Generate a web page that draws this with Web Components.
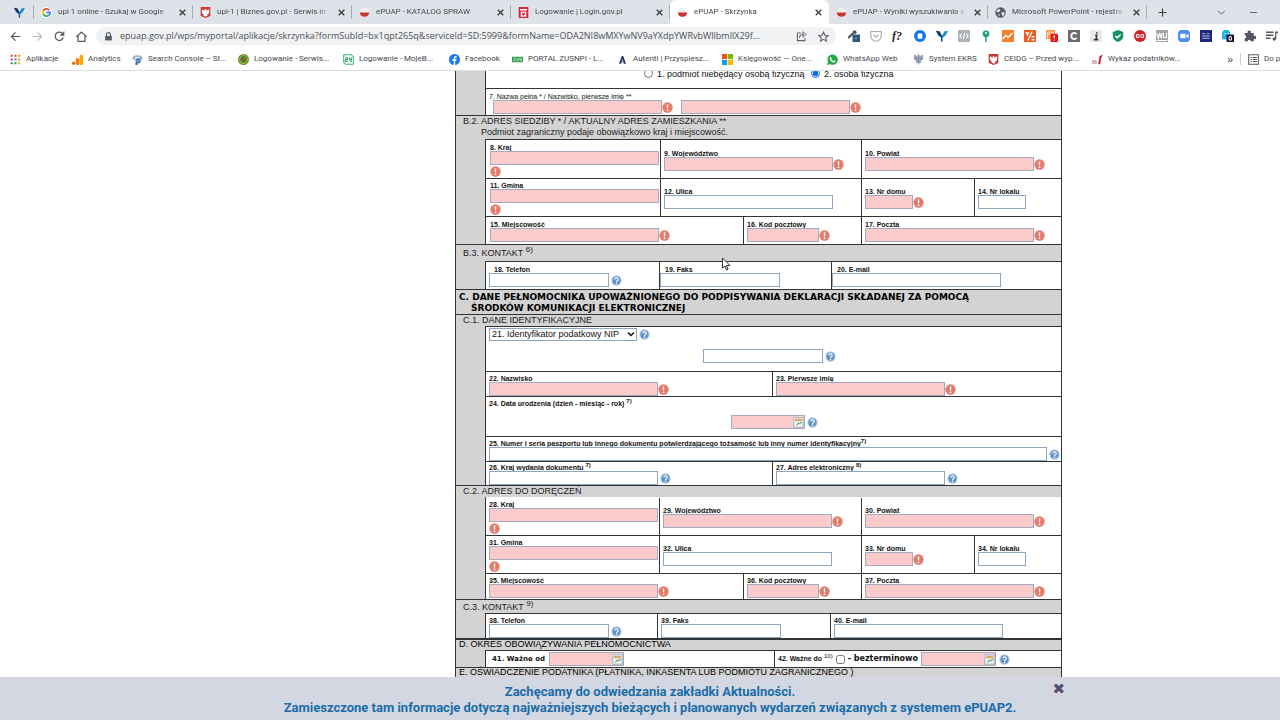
<!DOCTYPE html>
<html lang="pl">
<head>
<meta charset="utf-8">
<title>ePUAP - Skrzynka</title>
<style>
  html, body { height: 100%; }
  body {
    margin: 0;
    display: flex;
    flex-direction: column;
    overflow: hidden;
    background: #fff;
    color: #111;
    font-family: "Liberation Sans", Arial, sans-serif;
  }
</style>
</head>
<body>
<browser-chrome></browser-chrome>

<page-view>
  <form-section>
    <form-row style="--h:26px; --cols:158fr 167fr 250fr">
      <span></span>
      <radio-choice plain label="1. podmiot niebędący osobą fizyczną"></radio-choice>
      <radio-choice plain checked label="2. osoba fizyczna"></radio-choice>
    </form-row>
    <form-row style="--h:27px; --cols:188fr 387fr">
      <form-field light label="7. Nazwa pełna * / Nazwisko, pierwsze imię **" w="169" state="error" style="--input-indent:4px"></form-field>
      <form-field plain hint="Pierwsze imię" w="169" state="error" style="--input-indent:4px"></form-field>
    </form-row>
  </form-section>

  <form-section>
    <form-heading slot="heading" style="--h:24px">B.2. ADRES SIEDZIBY * / AKTUALNY ADRES ZAMIESZKANIA **
      <span slot="sub">Podmiot zagraniczny podaje obowiązkowo kraj i miejscowość.</span></form-heading>
    <form-row style="--h:39px; --cols:174fr 201fr 200fr; --first-pad:4px">
      <form-field label="8. Kraj" w="169" state="error" below></form-field>
      <form-field label="9. Województwo" w="169" state="error"></form-field>
      <form-field label="10. Powiat" w="169" state="error"></form-field>
    </form-row>
    <form-row style="--h:38px; --cols:174fr 201fr 113fr 87fr; --first-pad:4px">
      <form-field label="11. Gmina" w="169" state="error" below></form-field>
      <form-field label="12. Ulica" w="169"></form-field>
      <form-field label="13. Nr domu" w="48" state="error"></form-field>
      <form-field label="14. Nr lokalu" w="48"></form-field>
    </form-row>
    <form-row style="--h:28px; --cols:257fr 118fr 200fr; --first-pad:4px">
      <form-field label="15. Miejscowość" w="169" state="error"></form-field>
      <form-field label="16. Kod pocztowy" w="72" state="error"></form-field>
      <form-field label="17. Poczta" w="169" state="error"></form-field>
    </form-row>
  </form-section>

  <form-section>
    <form-heading slot="heading" style="--h:17px; --top:3px">B.3. KONTAKT <sup>6)</sup></form-heading>
    <form-row style="--h:28px; --cols:173fr 172fr 230fr; --label-indent:5px; --pad:0px; --first-pad:3px">
      <form-field label="18. Telefon" w="120" state="help"></form-field>
      <form-field label="19. Faks" w="120"></form-field>
      <form-field label="20. E-mail" w="169"></form-field>
    </form-row>
  </form-section>

  <form-section>
    <form-heading slot="heading" strong style="--h:25px">C. DANE PEŁNOMOCNIKA UPOWAŻNIONEGO DO PODPISYWANIA DEKLARACJI SKŁADANEJ ZA POMOCĄ
      <span slot="sub">ŚRODKÓW KOMUNIKACJI ELEKTRONICZNEJ</span></form-heading>
    <form-heading slot="heading" style="--h:12px">C.1. DANE IDENTYFIKACYJNE</form-heading>
    <form-row style="--h:45px; --cols:1fr">
      <tax-identifier></tax-identifier>
    </form-row>
    <form-row style="--h:25px; --cols:286fr 289fr">
      <form-field label="22. Nazwisko" w="169" state="error"></form-field>
      <form-field label="23. Pierwsze imię" w="169" state="error"></form-field>
    </form-row>
    <form-row style="--h:40px; --cols:1fr">
      <form-field label="24. Data urodzenia (dzień - miesiąc - rok)" note="7)" w="74" state="help" date style="--input-indent:242px"></form-field>
    </form-row>
    <form-row style="--h:25px; --cols:1fr">
      <form-field label="25. Numer i seria paszportu lub innego dokumentu potwierdzającego tożsamość lub inny numer identyfikacyjny" note="7)" tight w="558" state="help"></form-field>
    </form-row>
    <form-row style="--h:24px; --cols:286fr 289fr">
      <form-field label="26. Kraj wydania dokumentu" note="7)" w="169" state="help"></form-field>
      <form-field label="27. Adres elektroniczny" note="8)" w="169" state="help"></form-field>
    </form-row>
  </form-section>

  <form-section>
    <form-heading slot="heading" style="--h:12px">C.2. ADRES DO DORĘCZEŃ</form-heading>
    <form-row style="--h:38px; --cols:173fr 202fr 200fr; --line:transparent">
      <form-field label="28. Kraj" w="169" state="error" below></form-field>
      <form-field label="29. Województwo" w="169" state="error"></form-field>
      <form-field label="30. Powiat" w="169" state="error"></form-field>
    </form-row>
    <form-row style="--h:38px; --cols:173fr 202fr 113fr 87fr">
      <form-field label="31. Gmina" w="169" state="error" below></form-field>
      <form-field label="32. Ulica" w="169"></form-field>
      <form-field label="33. Nr domu" w="48" state="error"></form-field>
      <form-field label="34. Nr lokalu" w="48"></form-field>
    </form-row>
    <form-row style="--h:26px; --cols:257fr 118fr 200fr">
      <form-field label="35. Miejscowość" w="169" state="error"></form-field>
      <form-field label="36. Kod pocztowy" w="72" state="error"></form-field>
      <form-field label="37. Poczta" w="169" state="error"></form-field>
    </form-row>
  </form-section>

  <form-section>
    <form-heading slot="heading" style="--h:14px; --top:2px">C.3. KONTAKT <sup>9)</sup></form-heading>
    <form-row style="--h:25px; --cols:171fr 173fr 231fr">
      <form-field label="38. Telefon" w="120" state="help"></form-field>
      <form-field label="39. Faks" w="120"></form-field>
      <form-field label="40. E-mail" w="169"></form-field>
    </form-row>
  </form-section>

  <form-section>
    <form-heading slot="heading" major style="--h:12px; --rule:2px">D. OKRES OBOWIĄZYWANIA PEŁNOMOCNICTWA</form-heading>
    <form-row style="--h:17px; --cols:288fr 287fr">
      <validity-from></validity-from>
      <validity-to></validity-to>
    </form-row>
  </form-section>

  <form-section>
    <form-heading slot="heading" major style="--h:40px">E. OŚWIADCZENIE PODATNIKA (PŁATNIKA, INKASENTA LUB PODMIOTU ZAGRANICZNEGO )</form-heading>
  </form-section>
</page-view>

<notice-bar>
  <p>Zachęcamy do odwiedzania zakładki Aktualności.</p>
  <p>Zamieszczone tam informacje dotyczą najważniejszych bieżących i planowanych wydarzeń związanych z systemem ePUAP2.</p>
</notice-bar>
<mouse-pointer></mouse-pointer>

<script>
// every glyph is drawn on a 16x16 grid
const stroke = 'fill="none" stroke="#555a60" stroke-width="1.8"';
const flag = '<circle cx="8" cy="8" r="7" fill="#f1eeee"/><path d="M1 8h14a7 6 0 0 1-14 0z" fill="#c5362f"/>';
const eagle = (bg, fg) => `<path d="M1 0h14v13l-7 3-7-3z" fill="${bg}"/><path d="M8 3l1.500 1v2l2-2.500 2 .5-.5 5-2.500 2 .5 2H9l-1 1.500L7 13H5l.5-2L3 9l-.5-5 2-.5 2 2.500V4z" fill="${fg}"/>`;
const icons = {
  y: '<path d="M0 1l5 1 3 6 3-6 5-1-3 6-4 3v5l-1 1-1-1v-5L3 7z" fill="#1789c9"/><path d="M0 1l5 1 3 6v8l-1-1v-5L3 7z" fill="#123c6b"/>',
  google: '<circle cx="8" cy="8" r="8" fill="#fff"/><g fill="none" stroke-width="2.600"><path d="M12 4.500A5.300 5.300 0 0 0 3.400 5.500" stroke="#ea4335"/><path d="M3.400 5.500a5.300 5.300 0 0 0 0 5" stroke="#fbbc05"/><path d="M3.400 10.500A5.300 5.300 0 0 0 11.500 12" stroke="#34a853"/><path d="M11.500 12A5.300 5.300 0 0 0 13.300 8H8" stroke="#4285f4"/></g>',
  biznes: eagle('#d23a3a', '#fff'),
  login: '<path d="M1 0h14v16H1z" fill="#d8293c"/><path d="M3 3h10v2H3zM4 7h8v7H4z" fill="#fff"/><path d="M6 8l2 1 2-1v3l-2 2-2-2z" fill="#d8293c"/>',
  flag,
  globe: '<circle cx="8" cy="8" r="7.500" fill="#54585e"/><path d="M3 4l4-1 1 2-3 3-3-1zM9 8l4-1 1 3-3 4-1-3zM4 10l3 1v3z" fill="#dfe2e8"/>',
  close: '<path d="M3 3l10 10M13 3L3 13" stroke="#3c4043" stroke-width="2.400"/>',
  plus: '<path d="M8 1v14M1 8h14" stroke="#3c4043" stroke-width="2"/>',
  chevron: '<path d="M2 5l6 6 6-6" fill="none" stroke="#50545a" stroke-width="1.600"/>',
  caret: '<path d="M2 5l6 6 6-6" fill="none" stroke="#111" stroke-width="3"/>',
  minus: '<path d="M2 8h12" stroke="#50545a" stroke-width="1.600"/>',
  back: `<path d="M15 8H2M8 2L2 8l6 6" ${stroke}/>`,
  forward: '<path d="M1 8h13M8 2l6 6-6 6" fill="none" stroke="#b9bcc0" stroke-width="1.800"/>',
  reload: `<path d="M13.500 9.500A6 6 0 1 1 12 3.500" ${stroke}/><path d="M15 0v7H8z" fill="#555a60"/>`,
  home: `<path d="M1 8l7-6.500L15 8h-2v7H3V8z" ${stroke}/>`,
  lock: '<path d="M2 7h12v8H2z" fill="#5a5e63"/><path d="M4.500 7V4.500a3.500 3.500 0 0 1 7 0V7" fill="none" stroke="#5a5e63" stroke-width="2"/>',
  share: '<path d="M7 3H2v11h11v-4M5 10c0-4 3-5 6-5" fill="none" stroke="#5f6368" stroke-width="1.500"/><path d="M10 1l5 4-5 4z" fill="none" stroke="#5f6368" stroke-width="1.300"/>',
  star: '<path d="M8 1.500l2 4.600 5 .4-3.800 3.300 1.200 4.900L8 12l-4.400 2.700 1.200-4.900L1 6.500l5-.4z" fill="none" stroke="#5f6368" stroke-width="1.500"/>',
  picker: '<path d="M0 9l6-6 2 2-6 6H0zM6 2l3-2 3 3-3 3z" fill="#4a4f57"/><path d="M6 6h10v10H6z" fill="#33557d"/><path d="M9 11h3" stroke="#b8cce4"/>',
  pocket: '<path d="M1 2h14v6a7 7 0 0 1-14 0z" fill="#fafafa" stroke="#a8abb0" stroke-width="1.500"/><path d="M5 6.500l3 3 3-3" fill="none" stroke="#a8abb0" stroke-width="1.600"/>',
  font: '<text x="0" y="13" font-family="Liberation Serif" font-style="italic" font-weight="700" font-size="16" fill="#222">f?</text>',
  bluebox: '<circle cx="8" cy="8" r="8" fill="#1677e6"/><rect x="5" y="4.500" width="6" height="7" rx="1" fill="#fff"/>',
  code: '<path d="M0 0h16v16H0z" fill="#aeb2b9"/><path d="M5 5L2.500 8 5 11M11 5l2.500 3-2.500 3M9 4l-2 8" fill="none" stroke="#fff" stroke-width="1.500"/>',
  pin: '<circle cx="8" cy="5" r="4.500" fill="#1aa37c"/><path d="M7 8h2v8H7z" fill="#1aa37c"/><circle cx="8" cy="4" r="1.300" fill="#fff"/>',
  trend: '<path d="M0 0h16v16H0z" fill="#f0802a"/><path d="M1 12l4-5 3 3 6-6" fill="none" stroke="#fff" stroke-width="2"/>',
  percent: '<path d="M0 0h16v16H0z" fill="#ef5b1e"/><path d="M11 2L5 14M2 4h4L4 8M10 9h4M10 13h4" fill="none" stroke="#fff" stroke-width="1.700"/>',
  alert: '<path d="M0 0h12v12H0z" fill="#f59a4a"/><path d="M2 10V3h3v3H2M7 10V3h3v3H7" fill="none" stroke="#fde3c8" stroke-width="1.300"/><rect x="6" y="5" width="10" height="11" rx="1" fill="#f01414"/><path d="M11 7v4M11 12.500v1.500" stroke="#fff" stroke-width="1.700"/>',
  grayc: '<path d="M0 0h16v16H0z" fill="#6b6c6e"/><path d="M11.500 5.500a4 4 0 1 0 0 5" fill="none" stroke="#fff" stroke-width="2.500"/>',
  info: '<path d="M0 0h16v16H0z" fill="#e9e9e9"/><path d="M9 3v2M7 7h2l-1 5h2M5 13h6" fill="none" stroke="#333" stroke-width="2"/>',
  shield: '<path d="M8 0l7 2.500V8c0 4-3 6.500-7 8-4-1.500-7-4-7-8V2.500z" fill="#12916a"/><path d="M4.500 8l2.500 2.500L11.500 6" fill="none" stroke="#fff" stroke-width="2"/>',
  link: '<circle cx="8" cy="8" r="8" fill="#d2202c"/><path d="M7 6H5a2 2 0 0 0 0 4h2M9 6h2a2 2 0 0 1 0 4H9M5.500 8h5" fill="none" stroke="#fff" stroke-width="1.600"/>',
  wu: '<path d="M0 0h16v16H0z" fill="#a5a6a8"/><path d="M1 4l2 7 2-6 2 6 1-7M10 4v6h4V4M1 14h14" fill="none" stroke="#fff" stroke-width="1.500"/>',
  zoom: '<rect width="16" height="16" rx="5" fill="#4a8cf0"/><path d="M3 5h7v6H3zM11 7l3-2v6l-3-2z" fill="#fff"/>',
  navy: '<path d="M0 0h16v16H0z" fill="#1d2a7c"/><path d="M3 5h4M9 5h3M3 8h10M3 11h10" stroke="#c6cdf2" stroke-width="1.200"/>',
  ghost: '<path d="M0 13V5a5 5 0 0 1 11 0v8l-2-1-2 1-2-1-2 1-1-1z" fill="#1fb4e6"/><circle cx="4" cy="5" r="1" fill="#fff"/><circle cx="8" cy="5" r="1" fill="#fff"/><rect x="6" y="6" width="10" height="10" rx="1" fill="#1c1033"/><ellipse cx="11" cy="11" rx="1.700" ry="2.700" fill="none" stroke="#fff" stroke-width="1.500"/>',
  puzzle: '<path d="M1 4h4a2.300 2.300 0 1 1 4 0h4v4a2.300 2.300 0 1 1 0 4v3H9a2 2 0 1 0-4 0H1v-4a2 2 0 1 0 0-4z" fill="#54585e"/>',
  playlist: '<path d="M0 3h10M0 7h10M0 11h6" stroke="#54585e" stroke-width="1.700"/><path d="M13 12V3h3" fill="none" stroke="#54585e" stroke-width="1.700"/><circle cx="11" cy="12" r="2.200" fill="#54585e"/>',
  apps: '<g><path d="M1 1h3v3H1zM6.500 1h3v3h-3zM1 6.500h3v3H1z" fill="#db4437"/><path d="M12 1h3v3h-3zM12 6.500h3v3h-3z" fill="#f09300"/><path d="M6.500 6.500h3v3h-3z" fill="#4285f4"/><path d="M1 12h3v3H1zM6.500 12h3v3h-3z" fill="#0f9d58"/><path d="M12 12h3v3h-3z" fill="#f4b400"/></g>',
  analytics: '<rect x="11" y="1" width="5" height="15" rx="2" fill="#f9ab00"/><rect x="5.500" y="6" width="5" height="10" rx="2" fill="#ef7d13"/><circle cx="2.500" cy="13.500" r="2.500" fill="#e37400"/>',
  search: '<path d="M1 5l3-3h8l3 3v3H1z" fill="#8b9cc0"/><path d="M4 4h8v3H4z" fill="#e8edf5"/><circle cx="9" cy="10" r="3.500" fill="#5a91e6" stroke="#48618f"/><path d="M5 12h3v4H5z" fill="#48618f"/>',
  pue: '<circle cx="8" cy="8" r="7" fill="#eec92a" stroke="#6f8d34" stroke-width="2"/><circle cx="8" cy="8" r="5" fill="#2f8f43"/><circle cx="8" cy="8" r="2.500" fill="#d8392b"/>',
  box24: '<path d="M2 1h10l3 3v11H4l-3-3V1z" fill="#f5fcf8" stroke="#3fb57c" stroke-width="1.500"/><path d="M3.500 5.500h3V8h-3v3h3.500M9.500 5v3.500H13M12 5v6.500" fill="none" stroke="#24a067" stroke-width="1.500"/>',
  facebook: '<circle cx="8" cy="8" r="8" fill="#1877f2"/><path d="M7 16v-6H5V7.500h2V6c0-2.500 1.500-3.500 4-3v2c-1.500 0-2 0-2 1.300v1.200h2L10.500 10H9v6z" fill="#fff"/>',
  zus: '<path d="M0 4h16v8H0z" fill="#2d9a4c"/><path d="M2 6h3l-3 4h3M7 6v4h2V6M14 6h-3v2h3v2h-3" fill="none" stroke="#d9f2df" stroke-width="1"/>',
  autenti: '<path d="M3 14L7 3h2l4 11h-3L8 7l-2 7z" fill="#1d2f57"/><path d="M6 10h4v2H6z" fill="#4c76bd"/>',
  windows: '<path d="M0 0h7.500v7.500H0z" fill="#f25022"/><path d="M8.500 0H16v7.500H8.500z" fill="#7fba00"/><path d="M0 8.500h7.500V16H0z" fill="#00a4ef"/><path d="M8.500 8.500H16V16H8.500z" fill="#ffb900"/>',
  whatsapp: '<path d="M0 16l1.500-4.500A7.500 7.500 0 1 1 5 15z" fill="#25a945"/><path d="M5 4l2 2-1 1.500L9 10l1.500-1 2 2c-1 2-3 1.500-5 .5S4 8 4 6z" fill="#fff"/>',
  ekrs: '<path d="M8 0l2 2v2l2-3 3 1-.5 6-3 2 .5 3H9.500L8 16l-1.500-3H4l.5-3-3-2L1 2l3-1 2 3V2z" fill="#9aa7bb"/><path d="M8 5v7M4 4v4M12 4v4" stroke="#6d7b93"/>',
  ceidg: eagle('#c8372f', '#fff'),
  wykaz: '<path d="M9 15L11 3l5-2-3 5-1 9z" fill="#c5203a"/><path d="M0 10h3v3H0M4 10h2v4H4" fill="none" stroke="#8d4b56"/>',
  list: '<path d="M1 1h14v14H1z" fill="none" stroke="#54585e" stroke-width="1.500"/><path d="M3.500 5h2M7 5h6M3.500 8h2M7 8h6M3.500 11h2M7 11h6" stroke="#54585e" stroke-width="1.500"/>',
  error: '<circle cx="8" cy="8" r="7.500" fill="#e0705f"/><circle cx="8" cy="8" r="5.500" fill="none" stroke="#eca091"/><path d="M8 3.500v6M8 11v2" stroke="#fff" stroke-width="2.200"/>',
  help: '<circle cx="8" cy="8" r="7.500" fill="#b3cbe6"/><circle cx="8" cy="8" r="5.800" fill="#5f92c8"/><path d="M5.500 6.500c0-3 5-3 5 0 0 2-2.500 1.500-2.500 3.500M8 11v2" fill="none" stroke="#fff" stroke-width="1.700"/>',
  calendar: '<path d="M1 1h14v14H1z" fill="#dceaf0" stroke="#93a9b8"/><path d="M3 3h10v3H3z" fill="#e9a45b"/><path d="M3 8h10v5H3z" fill="#f8fbfc"/><path d="M5 12l3-3 2 1 3-3" fill="none" stroke="#5ea45f" stroke-width="1.600"/>'
};

class UiIcon extends HTMLElement {
  constructor() {
    super();
    this.attachShadow({mode:"open"});
  }
  connectedCallback() {
    this.shadowRoot.innerHTML = `
      <style>
        :host { display: block; flex: none; width: var(--size, 11px); height: var(--size, 11px); }
        svg { display: block; width: 100%; height: 100%; }
      </style>
      <svg viewBox="0 0 16 16" aria-hidden="true">${icons[this.getAttribute("name")]}</svg>
    `;
  }
}
window.customElements.define("ui-icon", UiIcon);


class BrowserTab extends HTMLElement {
  constructor() {
    super();
    this.attachShadow({mode:"open"});
  }
  connectedCallback() {
    this.shadowRoot.innerHTML = `
      <style>
        :host {
          display: flex;
          align-items: center;
          box-sizing: border-box;
          flex: 0 1 159px;
          min-width: 0;
          height: 24px;
          padding: 0 6px 0 7px;
          border-right: 1px solid transparent;
        }
        :host::after { content: ""; width: 1px; height: 14px; margin-right: -7px; margin-left: 5px; background: #a9adb4; }
        :host([active]) { background: #fff; border-radius: 6px 6px 0 0; }
        :host([active])::after { background: transparent; }
        a {
          flex: 1;
          min-width: 0;
          margin: 0 6px;
          overflow: hidden;
          white-space: nowrap;
          color: #45494e;
          text-decoration: none;
          -webkit-mask-image: linear-gradient(90deg, #000 88%, transparent);
        }
        button { padding: 0; border: 0; background: none; }
      </style>
      <ui-icon name="${this.getAttribute("icon")}"></ui-icon>
      <a href="#"><slot></slot></a>
      <button aria-label="Zamknij kartę"><ui-icon name="close" style="--size:9px"></ui-icon></button>
    `;
  }
}
window.customElements.define("browser-tab", BrowserTab);


class BookmarkLink extends HTMLElement {
  constructor() {
    super();
    this.attachShadow({mode:"open"});
  }
  connectedCallback() {
    this.shadowRoot.innerHTML = `
      <style>
        :host { display: block; }
        a { display: flex; align-items: center; gap: 5px; color: #45494e; text-decoration: none; white-space: nowrap; }
      </style>
      <a href="#"><ui-icon name="${this.getAttribute("icon")}"></ui-icon><slot></slot></a>
    `;
  }
}
window.customElements.define("bookmark-link", BookmarkLink);


class BrowserChrome extends HTMLElement {
  constructor() {
    super();
    this.attachShadow({mode:"open"});

    const tabs = [
      ["google", "upl 1 online - Szukaj w Google"],
      ["biznes", "upl-1 | Biznes.gov.pl - Serwis in"],
      ["flag", "ePUAP - KATALOG SPRAW"],
      ["login", "Logowanie | Login.gov.pl"],
      ["flag", "ePUAP - Skrzynka", "active"],
      ["flag", "ePUAP - Wyniki wyszukiwania e"],
      ["globe", "Microsoft PowerPoint - rejestra"]
    ];
    const extensions = ["picker", "pocket", "font", "bluebox", "y", "code", "pin", "trend", "percent", "alert",
      "grayc", "info", "shield", "link", "wu", "zoom", "navy", "ghost", "puzzle", "playlist"];
    const bookmarks = [
      ["apps", "Aplikacje"],
      ["analytics", "Analytics"],
      ["search", "Search Console – St..."],
      ["pue", "Logowanie - Serwis..."],
      ["box24", "Logowanie - MojeB..."],
      ["facebook", "Facebook"],
      ["zus", "PORTAL ZUSNPI - L..."],
      ["autenti", "Autenti | Przyspiesz..."],
      ["windows", "Księgowość — One..."],
      ["whatsapp", "WhatsApp Web"],
      ["ekrs", "System EKRS"],
      ["ceidg", "CEIDG – Przed wyp..."],
      ["wykaz", "Wykaz podatników..."]
    ];

    this.shadowRoot.innerHTML = `
      <style>
        :host {
          display: block;
          flex: none;
          overflow: hidden;
          background: #fff;
          border-bottom: 1px solid #dcdee1;
          font: 8px/12px Roboto, "Noto Sans", sans-serif;
          color: #45494e;
        }
        div { display: flex; align-items: center; }
        button { display: block; flex: none; padding: 0; border: 0; background: none; }
        .tabs { height: 24px; background: #dee2e9; }
        .pinned { width: 34px; justify-content: center; box-sizing: border-box; padding-left: 14px; }
        .pinned::after { content: ""; width: 1px; height: 14px; margin-left: 8px; background: #a9adb4; }
        .add { margin-left: 11px; }
        .window { flex: 1; justify-content: flex-end; gap: 23px; padding-right: 22px; }
        .tools { height: 24px; padding: 0 2px 0 10px; }
        .nav { flex: none; gap: 11px; }
        .address {
          flex: 1;
          min-width: 0;
          height: 18px;
          margin: 0 12px 0 9px;
          padding: 0 7px 0 8px;
          gap: 7px;
          border-radius: 9px;
          background: #f0f2f4;
        }
        .address button + button { margin-left: 4px; }
        input {
          flex: 1;
          min-width: 0;
          padding: 0;
          border: 0;
          background: none;
          font: 9px/16px "Open Sans", "Noto Sans", sans-serif;
          color: #4c5055;
          text-overflow: ellipsis;
        }
        .extensions { flex: none; gap: 10px; }
        .marks {
          display: grid;
          grid-template-columns: 62px 60px 106px 105px 106px 63px 105px 105px 105px 86px 75px 104px 135px 13px 1fr;
          height: 22px;
          padding-left: 10px;
          white-space: nowrap;
        }
        .more { font-size: 11px; color: #45494e; text-align: left; }
        .reading { border-left: 1px solid #c9ccd0; padding-left: 7px; }
      </style>
      <div class="tabs">
        <div class="pinned"><ui-icon name="y"></ui-icon></div>
        ${tabs.map((o) => `<browser-tab icon="${o[0]}" ${o[2] || ""}>${o[1]}</browser-tab>`).join('')}
        <button class="add" aria-label="Nowa karta"><ui-icon name="plus" style="--size:9px"></ui-icon></button>
        <div class="window">
          <button aria-label="Szukaj kart"><ui-icon name="chevron" style="--size:9px"></ui-icon></button>
          <button aria-label="Minimalizuj"><ui-icon name="minus" style="--size:9px"></ui-icon></button>
        </div>
      </div>
      <div class="tools">
        <div class="nav">
          <button aria-label="Wstecz"><ui-icon name="back"></ui-icon></button>
          <button aria-label="Dalej"><ui-icon name="forward"></ui-icon></button>
          <button aria-label="Odśwież"><ui-icon name="reload"></ui-icon></button>
          <button aria-label="Strona startowa"><ui-icon name="home"></ui-icon></button>
        </div>
        <div class="address">
          <ui-icon name="lock" style="--size:9px"></ui-icon>
          <input aria-label="Adres" value="epuap.gov.pl/wps/myportal/aplikacje/skrzynka?formSubId=bx1qpt265q&amp;serviceId=SD:5999&amp;formName=ODA2NI8wMXYwNV9aYXdpYWRvbWllbmllX29f...">
          <button aria-label="Udostępnij"><ui-icon name="share"></ui-icon></button>
          <button aria-label="Dodaj zakładkę"><ui-icon name="star"></ui-icon></button>
        </div>
        <div class="extensions">
          ${extensions.map((o) => `<ui-icon name="${o}" style="--size:12px"></ui-icon>`).join('')}
        </div>
      </div>
      <div class="marks">
        ${bookmarks.map((o) => `<bookmark-link icon="${o[0]}">${o[1]}</bookmark-link>`).join('')}
        <button class="more" aria-label="Więcej zakładek">»</button>
        <bookmark-link class="reading" icon="list">Do p</bookmark-link>
      </div>
    `;
  }
}
window.customElements.define("browser-chrome", BrowserChrome);


class PageView extends HTMLElement {
  constructor() {
    super();
    this.attachShadow({mode:"open"});
    // the sheet is scrolled a little past its first visible row
    this.shadowRoot.innerHTML = `
      <style>
        :host { display: block; flex: 1; min-height: 0; overflow: hidden; }
        main {
          box-sizing: border-box;
          max-width: 607px;
          margin: -9px 0 0 455px;
          border: solid #333;
          border-width: 0 1px;
        }
      </style>
      <main><slot></slot></main>
    `;
  }
}
window.customElements.define("page-view", PageView);


class FormSection extends HTMLElement {
  constructor() {
    super();
    this.attachShadow({mode:"open"});
    this.shadowRoot.innerHTML = `
      <style>
        :host { display: block; background: #d3d3d3; }
        .rows { margin-left: 29px; border-left: 1px solid #333; background: #fff; }
      </style>
      <slot name="heading"></slot>
      <div class="rows"><slot></slot></div>
    `;
  }
}
window.customElements.define("form-section", FormSection);


class FormHeading extends HTMLElement {
  constructor() {
    super();
    this.attachShadow({mode:"open"});
    this.shadowRoot.innerHTML = `
      <style>
        :host {
          display: block;
          box-sizing: border-box;
          min-height: var(--h);
          padding: var(--top, 0) 0 0 7px;
          border-top: var(--rule, 1px) solid #333;
          font-size: 9px;
          line-height: 11px;
          color: #222;
          white-space: nowrap;
        }
        :host([strong]) { padding: 2px 0 0 3px; font: bold 9px/11px "DejaVu Sans", Verdana, sans-serif; color: #000; }
        :host([major]) { padding-left: 3px; color: #000; line-height: 9px; }
        .sub { padding-left: 18px; }
        :host([strong]) .sub { padding-left: 12px; }
        ::slotted(sup) { font-size: 8px; line-height: 0; }
      </style>
      <div><slot></slot></div>
      <div class="sub"><slot name="sub"></slot></div>
    `;
  }
}
window.customElements.define("form-heading", FormHeading);


class FormRow extends HTMLElement {
  constructor() {
    super();
    this.attachShadow({mode:"open"});
    this.shadowRoot.innerHTML = `
      <style>
        :host {
          display: grid;
          grid-template-columns: var(--cols);
          box-sizing: border-box;
          min-height: var(--h);
          border-top: 1px solid var(--line, #333);
        }
        ::slotted(*) { min-width: 0; border-left: 1px solid #333; }
        ::slotted(:first-child), ::slotted([plain]) { border-left: 0; }
        ::slotted(form-field:first-child) { --pad: var(--first-pad, 3px); }
      </style>
      <slot></slot>
    `;
  }
}
window.customElements.define("form-row", FormRow);


const inputStyle = `
  input {
    box-sizing: border-box;
    height: 14px;
    margin: 0;
    padding: 0 2px;
    border: 1px solid #8ea6c4;
    border-radius: 0;
    background: #fff;
    font: 9px/12px "Liberation Sans", Arial, sans-serif;
  }
  input.missing { background: #fccccc; border-color: #a5a9bd; }
  .date { display: flex; align-items: center; border: 1px solid #a5a9bd; background: #fccccc; }
  .date input { flex: 1; min-width: 0; height: 12px; border: 0; background: none; }
  .date button { padding: 0; border: 0; background: none; }
`;

class FormField extends HTMLElement {
  constructor() {
    super();
    this.attachShadow({mode:"open"});
  }
  connectedCallback() {
    const label = this.getAttribute("label");
    const note = this.getAttribute("note");
    const state = this.getAttribute("state");
    const width = this.getAttribute("w");
    const missing = state === "error" ? "missing" : "";
    const hint = this.getAttribute("hint");
    const box = this.hasAttribute("date")
      ? `<span class="date" style="width:${width - 2}px"><input id="value"><button aria-label="Kalendarz"><ui-icon name="calendar"></ui-icon></button></span>`
      : `<input id="value" class="${missing}" style="width:${width}px" ${hint ? `aria-label="${hint}"` : ""}>`;

    this.shadowRoot.innerHTML = `
      <style>
        :host {
          display: flex;
          flex-direction: column;
          justify-content: center;
          padding: 1px 0 0 var(--pad, 3px);
        }
        :host([date]) { justify-content: flex-start; padding-top: 2px; }
        label {
          height: 8px;
          padding-left: var(--label-indent, 0);
          font-size: 7px;
          font-weight: bold;
          line-height: 9px;
          white-space: nowrap;
          color: #111;
        }
        :host([light]) label { font-weight: normal; }
        :host([date]) label { margin-bottom: 8px; }
        sup { font-size: 6px; line-height: 0; }
        .line { display: flex; align-items: center; padding-left: var(--input-indent, 0); }
        :host([below]) .line { flex-wrap: wrap; }
        .line > ui-icon { margin-top: 1px; }
        .help { margin-left: 2px; }
        ${inputStyle}
      </style>
      ${label ? `<label for="value">${label}${note ? `${this.hasAttribute("tight") ? "" : " "}<sup>${note}</sup>` : ""}</label>` : `<label></label>`}
      <div class="line">${box}${state ? `<ui-icon class="${state}" name="${state}"></ui-icon>` : ""}</div>
    `;
  }
}
window.customElements.define("form-field", FormField);


class RadioChoice extends HTMLElement {
  constructor() {
    super();
    this.attachShadow({mode:"open"});
  }
  connectedCallback() {
    this.shadowRoot.innerHTML = `
      <style>
        :host { display: flex; align-items: center; padding-bottom: 4px; }
        label { display: flex; align-items: center; gap: 4px; font-size: 9px; line-height: 12px; white-space: nowrap; }
        input { width: 9px; height: 9px; margin: 0; accent-color: #0b6be0; }
      </style>
      <label><input type="radio" ${this.hasAttribute("checked") ? "checked" : ""}>${this.getAttribute("label")}</label>
    `;
  }
}
window.customElements.define("radio-choice", RadioChoice);


class TaxIdentifier extends HTMLElement {
  constructor() {
    super();
    this.attachShadow({mode:"open"});
    this.shadowRoot.innerHTML = `
      <style>
        :host { display: block; padding: 1px 0 0 3px; }
        div { display: flex; align-items: center; gap: 2px; }
        .number { margin-top: 8px; padding-left: 214px; }
        .choice { position: relative; display: block; }
        .choice ui-icon { position: absolute; right: 2px; top: 2px; pointer-events: none; }
        select {
          display: block;
          box-sizing: border-box;
          width: 148px;
          height: 13px;
          padding: 0 2px;
          appearance: none;
          border: 1px solid #8ea6c4;
          border-radius: 0;
          background: #fff;
          color: #111;
          font: 9px/11px "Liberation Sans", Arial, sans-serif;
        }
        ${inputStyle}
        input { width: 120px; }
      </style>
      <div>
        <span class="choice">
          <select aria-label="Rodzaj identyfikatora"><option>21. Identyfikator podatkowy NIP</option></select>
          <ui-icon name="caret" style="--size:8px"></ui-icon>
        </span>
        <ui-icon name="help"></ui-icon>
      </div>
      <div class="number"><input aria-label="Identyfikator podatkowy NIP"><ui-icon name="help"></ui-icon></div>
    `;
  }
}
window.customElements.define("tax-identifier", TaxIdentifier);


const validityStyle = `
  :host { display: flex; align-items: center; font: bold 8px/12px "DejaVu Sans", Verdana, sans-serif; white-space: nowrap; }
  ${inputStyle}
  .date { width: 73px; }
`;
const dateBox = (id, hint) => `<span class="date"><input id="${id}" aria-label="${hint}"><button aria-label="Kalendarz"><ui-icon name="calendar"></ui-icon></button></span>`;

class ValidityFrom extends HTMLElement {
  constructor() {
    super();
    this.attachShadow({mode:"open"});
    this.shadowRoot.innerHTML = `
      <style>${validityStyle} :host { padding-left: 6px; gap: 4px; font-size: 7px; }</style>
      <label for="from">41. Ważne od</label>${dateBox("from", "Ważne od")}
    `;
  }
}
window.customElements.define("validity-from", ValidityFrom);

class ValidityTo extends HTMLElement {
  constructor() {
    super();
    this.attachShadow({mode:"open"});
    this.shadowRoot.innerHTML = `
      <style>
        ${validityStyle}
        :host { padding-left: 3px; gap: 3px; }
        .name { font: bold 7px/12px "Liberation Sans", Arial, sans-serif; }
        sup { font-size: 6px; line-height: 0; font-weight: normal; }
        .forever { display: flex; align-items: center; gap: 3px; }
        input[type=checkbox] { width: 9px; height: 9px; }
      </style>
      <label class="name" for="to">42. Ważne do <sup>10)</sup></label>
      <label class="forever"><input type="checkbox">- bezterminowo</label>
      ${dateBox("to", "Ważne do")}<ui-icon name="help"></ui-icon>
    `;
  }
}
window.customElements.define("validity-to", ValidityTo);


class NoticeBar extends HTMLElement {
  constructor() {
    super();
    this.attachShadow({mode:"open"});
    this.shadowRoot.innerHTML = `
      <style>
        :host {
          position: fixed;
          left: 0;
          right: 0;
          bottom: 0;
          box-sizing: border-box;
          min-height: 43px;
          padding: 7px 0 4px 20px;
          background: #d3d7e1;
          color: #1a6da8;
          font: bold 13px/16px Roboto, Arial, sans-serif;
          text-align: center;
        }
        ::slotted(p) { margin: 0; }
        button {
          position: absolute;
          top: 5px;
          right: 215px;
          padding: 0;
          border: 0;
          background: none;
          color: #5c4d6e;
          font: 15px/15px "DejaVu Sans", sans-serif;
        }
      </style>
      <slot></slot>
      <button aria-label="Zamknij">✖</button>
    `;
  }
}
window.customElements.define("notice-bar", NoticeBar);


class MousePointer extends HTMLElement {
  constructor() {
    super();
    this.attachShadow({mode:"open"});
    this.shadowRoot.innerHTML = `
      <style>
        :host { position: fixed; left: 722px; top: 257px; width: 9px; height: 14px; pointer-events: none; }
        svg { display: block; }
      </style>
      <svg width="9" height="14" viewBox="0 0 9 14" aria-hidden="true"><path d="M.5 1v10l2.500-2 1.500 4 1.500-.7L4.500 8.500H8z" fill="#fff" stroke="#333"/></svg>
    `;
  }
}
window.customElements.define("mouse-pointer", MousePointer);
</script>
</body>
</html>
